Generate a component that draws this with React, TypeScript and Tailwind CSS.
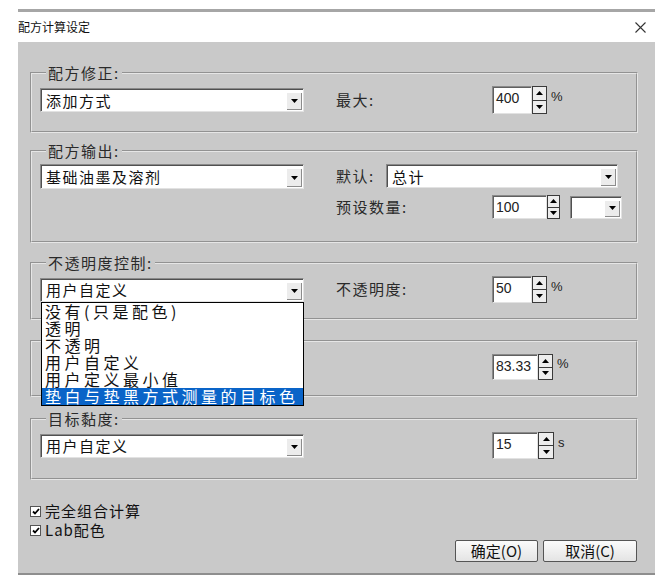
import React from "react"

const cjk = "font-['Noto_Sans_CJK_SC','Noto_Sans_CJK_JP',sans-serif]"
const num = "font-['Liberation_Sans','Noto_Sans_CJK_SC',sans-serif]"

const Tri = ({ up }: { up?: boolean }) => (
  <svg width="7" height="4" viewBox="0 0 7 4">
    <path d={up ? "M0 4 L3.5 0 L7 4Z" : "M0 0 L7 0 L3.5 4Z"} fill="#000" />
  </svg>
)

function Select({ text, className }: { text: string; className: string }) {
  return (
    <div
      className={`flex bg-white border border-t-[#8a8a8a] border-l-[#8a8a8a] border-r-[#e2e2e2] border-b-[#e2e2e2] shadow-[inset_1px_1px_0_#505050] ${className}`}
    >
      <span className={`flex-1 pl-[5px] text-[15px] tracking-[1.5px] leading-none flex items-center text-[#111] ${cjk}`}>
        {text}
      </span>
      <div className="w-[15px] mt-[4px] mb-[1px] mr-[1px] bg-[#ececec] border-r border-b border-[#8c8c8c] flex items-center justify-center">
        <Tri />
      </div>
    </div>
  )
}

function Spin({ value, box, btn, unit }: { value: string; box: string; btn: string; unit?: string }) {
  return (
    <div className="flex items-center">
      <div
        className={`bg-white border border-t-[#8a8a8a] border-l-[#8a8a8a] border-r-[#e2e2e2] border-b-[#e2e2e2] shadow-[inset_1px_1px_0_#606060] flex items-start pl-[3px] pt-[3px] text-[14px] leading-[16px] text-[#222] ${num} ${box}`}
      >
        {value}
      </div>
      <div className={`flex flex-col border border-[#3a3a3a] ${btn}`}>
        <div className="flex-1 bg-[#ededed] border-b border-[#3a3a3a] flex items-center justify-center">
          <Tri up />
        </div>
        <div className="flex-1 bg-[#ededed] flex items-center justify-center">
          <Tri />
        </div>
      </div>
      {unit && <span className={`ml-[4px] -mt-[6px] text-[13px] text-[#222] ${num}`}>{unit}</span>}
    </div>
  )
}

function Label({ text, className }: { text: string; className: string }) {
  return <span className={`text-[15px] tracking-[1.5px] text-[#2a2a2a] ${cjk} ${className}`}>{text}</span>
}

const groupCls =
  "ml-[12px] w-[608px] border-2 [border-style:groove] border-[#e6e6e6] px-[8px]"
const legendCls = `ml-[6px] px-[2px] text-[15px] leading-[16px] tracking-[1.5px] text-[#2a2a2a] ${cjk}`

const opts = ["没有(只是配色)", "透明", "不透明", "用户自定义", "用户定义最小值", "垫白与垫黑方式测量的目标色"]

function Check({ text }: { text: string }) {
  return (
    <div className="flex items-center gap-[4px] h-[19px]">
      <div className="w-[11px] h-[11px] bg-white border border-[#555] flex items-center justify-center">
        <svg width="8" height="7" viewBox="0 0 8 7">
          <path d="M1 3.5 L3 5.5 L7 1" stroke="#000" strokeWidth="1.8" fill="none" />
        </svg>
      </div>
      <span className={`text-[15px] tracking-[1px] text-[#111] ${cjk}`}>{text}</span>
    </div>
  )
}

function Btn({ text, className }: { text: string; className: string }) {
  return (
    <div
      className={`h-[22px] border border-[#555] rounded-[2px] bg-gradient-to-b from-[#fbfbfb] to-[#e4e4e4] flex items-center justify-center text-[15px] text-[#111] ${cjk} ${className}`}
    >
      {text}
    </div>
  )
}

export default function App() {
  return (
    <div className="w-[664px] h-[588px] bg-white pl-[18px] pt-[9px] overflow-hidden">
      <div className="w-[637px] border-t-[3px] border-[#a6a6a6]">
        <div className="h-[30px] flex items-center justify-between">
          <span className={`text-[12px] text-[#111] ${cjk}`}>配方计算设定</span>
          <svg width="11" height="11" viewBox="0 0 11 11" className="mr-[9px]">
            <path d="M0.5 0.5 L10.5 10.5 M10.5 0.5 L0.5 10.5" stroke="#333" strokeWidth="1.1" />
          </svg>
        </div>
        <div className="h-[533px] bg-[#c9c9c9] border-b-2 border-[#8e8e8e] pt-[23px] flex flex-col">
          <fieldset className={`${groupCls} pt-[5px] pb-[17px]`}>
            <legend className={legendCls}>配方修正:</legend>
            <div className="flex items-center">
              <Select text="添加方式" className="w-[264px] h-[24px]" />
              <Label text="最大:" className="ml-[32px] w-[156px]" />
              <Spin value="400" box="w-[40px] h-[28px]" btn="w-[15px] h-[28px]" unit="%" />
            </div>
          </fieldset>

          <fieldset className={`${groupCls} mt-[10px] pt-[5px] pb-[22px]`}>
            <legend className={legendCls}>配方输出:</legend>
            <div className="flex">
              <Select text="基础油墨及溶剂" className="w-[264px] h-[25px]" />
              <div className="ml-[32px] flex flex-col gap-[7px]">
                <div className="flex items-center">
                  <Label text="默认:" className="w-[50px]" />
                  <Select text="总计" className="w-[232px] h-[24px]" />
                </div>
                <div className="flex items-center">
                  <Label text="预设数量:" className="w-[156px]" />
                  <Spin value="100" box="w-[55px] h-[24px]" btn="w-[13px] h-[24px]" />
                  <Select text="" className="ml-[10px] w-[52px] h-[23px]" />
                </div>
              </div>
            </div>
          </fieldset>

          <fieldset className={`${groupCls} mt-[12px] pt-[5px] pb-[15px]`}>
            <legend className={legendCls}>不透明度控制:</legend>
            <div className="flex items-center">
              <div className="relative z-10">
                <Select text="用户自定义" className="w-[264px] h-[24px]" />
                <div className="absolute left-[1px] top-full w-[263px] bg-white border border-black">
                  {opts.map((o, i) => (
                    <div
                      key={i}
                      className={`h-[17px] pl-[3px] text-[16px] leading-[17px] tracking-[3.5px] whitespace-nowrap ${cjk} ${
                        i === opts.length - 1 ? "bg-[#0a64c8] text-white" : "text-[#111]"
                      }`}
                    >
                      {o}
                    </div>
                  ))}
                </div>
              </div>
              <Label text="不透明度:" className="ml-[32px] w-[156px]" />
              <Spin value="50" box="w-[40px] h-[27px]" btn="w-[15px] h-[27px]" unit="%" />
            </div>
          </fieldset>

          <fieldset className={`${groupCls} mt-[20px] pt-[12px] pb-[15px]`}>
            <div className="flex items-center">
              <div className="w-[264px]" />
              <div className="ml-[32px] w-[156px]" />
              <Spin value="83.33" box="w-[46px] h-[26px]" btn="w-[15px] h-[26px]" unit="%" />
            </div>
          </fieldset>

          <fieldset className={`${groupCls} mt-[14px] pt-[5px] pb-[19px]`}>
            <legend className={legendCls}>目标黏度:</legend>
            <div className="flex items-center">
              <Select text="用户自定义" className="w-[264px] h-[24px]" />
              <div className="ml-[32px] w-[156px]" />
              <Spin value="15" box="w-[46px] h-[27px]" btn="w-[16px] h-[27px]" unit="s" />
            </div>
          </fieldset>

          <div className="ml-[12px] mt-[22px] flex flex-col">
            <Check text="完全组合计算" />
            <Check text="Lab配色" />
          </div>
          <div className="flex justify-end gap-[5px] mr-[18px]">
            <Btn text="确定(O)" className="w-[83px]" />
            <Btn text="取消(C)" className="w-[94px]" />
          </div>
        </div>
      </div>
    </div>
  )
}
